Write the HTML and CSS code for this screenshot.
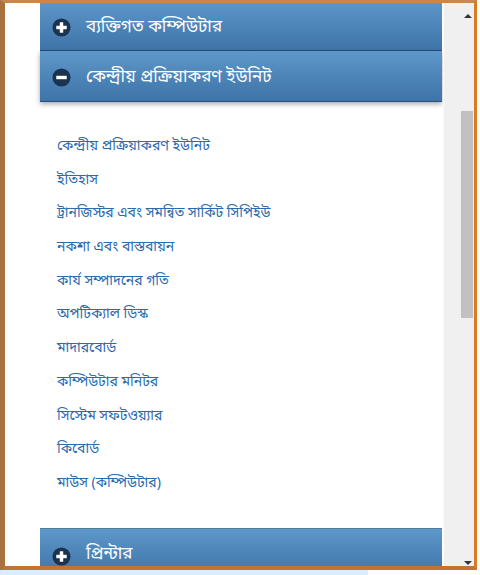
FILE: index.html
```html
<!DOCTYPE html>
<html lang="bn">
<head>
<meta charset="utf-8">
<title>Accordion</title>
<link rel="stylesheet" href="styles.css">
</head>
<body>
<div class="frame">
  <div class="main">
    <div class="content">
      <div class="bar first">
        <svg class="ico" viewBox="0 0 20 20" width="19" height="19"><circle cx="10" cy="10" r="9.5" fill="#1c3350"/><rect x="4.5" y="8.2" width="11" height="3.6" fill="#fff"/><rect x="8.2" y="4.5" width="3.6" height="11" fill="#fff"/></svg>
        <span class="label">ব্যক্তিগত কম্পিউটার</span>
      </div>
      <div class="bar open">
        <svg class="ico" viewBox="0 0 20 20" width="19" height="19"><circle cx="10" cy="10" r="9.5" fill="#1c3350"/><rect x="4.5" y="8.2" width="11" height="3.6" fill="#fff"/></svg>
        <span class="label">কেন্দ্রীয় প্রক্রিয়াকরণ ইউনিট</span>
      </div>
      <ul class="links">
        <li><a>কেন্দ্রীয় প্রক্রিয়াকরণ ইউনিট</a></li>
        <li><a>ইতিহাস</a></li>
        <li><a>ট্রানজিস্টর এবং সমন্বিত সার্কিট সিপিইউ</a></li>
        <li><a>নকশা এবং বাস্তবায়ন</a></li>
        <li><a>কার্য সম্পাদনের গতি</a></li>
        <li><a>অপটিক্যাল ডিস্ক</a></li>
        <li><a>মাদারবোর্ড</a></li>
        <li><a>কম্পিউটার মনিটর</a></li>
        <li><a>সিস্টেম সফটওয়্যার</a></li>
        <li><a>কিবোর্ড</a></li>
        <li><a>মাউস (কম্পিউটার)</a></li>
      </ul>
      <div class="bar last">
        <svg class="ico" viewBox="0 0 20 20" width="19" height="19"><circle cx="10" cy="10" r="9.5" fill="#1c3350"/><rect x="4.5" y="8.2" width="11" height="3.6" fill="#fff"/><rect x="8.2" y="4.5" width="3.6" height="11" fill="#fff"/></svg>
        <span class="label">প্রিন্টার</span>
      </div>
    </div>
  </div>
  <div class="scroll">
    <div class="arrow up"></div>
    <div class="track"><div class="thumb"></div></div>
    <div class="arrow down"></div>
  </div>
</div>
<div class="under"></div>
</body>
</html>
```
FILE: styles.css
```css
html, body {
  margin: 0;
  padding: 0;
  background: #ffffff;
}
body {
  font-family: "Noto Sans Bengali", "Lohit Bengali", "Vrinda", "Noto Sans", "DejaVu Sans", sans-serif;
}
.frame {
  width: 469px;
  height: 563px;
  display: flex;
  border-left: 5px solid #a9713f;
  border-right: 3px solid #dc7a22;
  border-top: 3px solid #c9874e;
  border-bottom: 4px solid #c5742f;
}
.main {
  flex: 1;
  overflow: hidden;
  background: #fff;
}
.content {
  margin-top: -2px;
  padding-left: 35px;
  padding-right: 1px;
}
.bar {
  height: 50px;
  box-sizing: border-box;
  display: flex;
  align-items: center;
  padding-left: 12px;
  padding-top: 3px;
  background: linear-gradient(#5e97c9, #3e74a8);
  border-bottom: 1px solid #27507d;
  color: #fff;
  font-size: 17px;
}
.bar.open {
  height: 51px;
  box-shadow: 0 2px 5px rgba(0, 0, 0, 0.35);
}
.bar.last {
  border-top: 1px solid #4f7d9a;
  align-items: flex-start;
  padding-top: 17px;
  height: 48px;
}
.ico {
  flex: none;
  margin-right: 15px;
}
.bar.last .ico {
  margin-top: 1px;
}
.label {
  line-height: 1;
}
.links {
  list-style: none;
  margin: 0;
  padding: 28px 0 27px 17px;
}
.links li {
  height: 33.7px;
  line-height: 33.7px;
  font-size: 14px;
}
.links a {
  color: #2a6aae;
}
.scroll {
  width: 30px;
  background: #f0f0f0;
  border-left: 1px solid #fafafa;
  display: flex;
  flex-direction: column;
  align-items: flex-end;
}
.arrow {
  width: 13px;
  height: 17px;
  display: flex;
  align-items: center;
  justify-content: center;
}
.arrow.up::before {
  content: "";
  border-left: 4px solid transparent;
  border-right: 4px solid transparent;
  border-bottom: 4px solid #333;
  margin-top: 8px;
}
.arrow.down::before {
  content: "";
  border-left: 4px solid transparent;
  border-right: 4px solid transparent;
  border-top: 4px solid #333;
  margin-top: 10px;
}
.track {
  flex: 1;
  width: 13px;
  padding-top: 91px;
}
.thumb {
  width: 12px;
  height: 207px;
  background: #c1c1c1;
}
.under {
  width: 368px;
  height: 5px;
  background: #dcecf8;
}
```
